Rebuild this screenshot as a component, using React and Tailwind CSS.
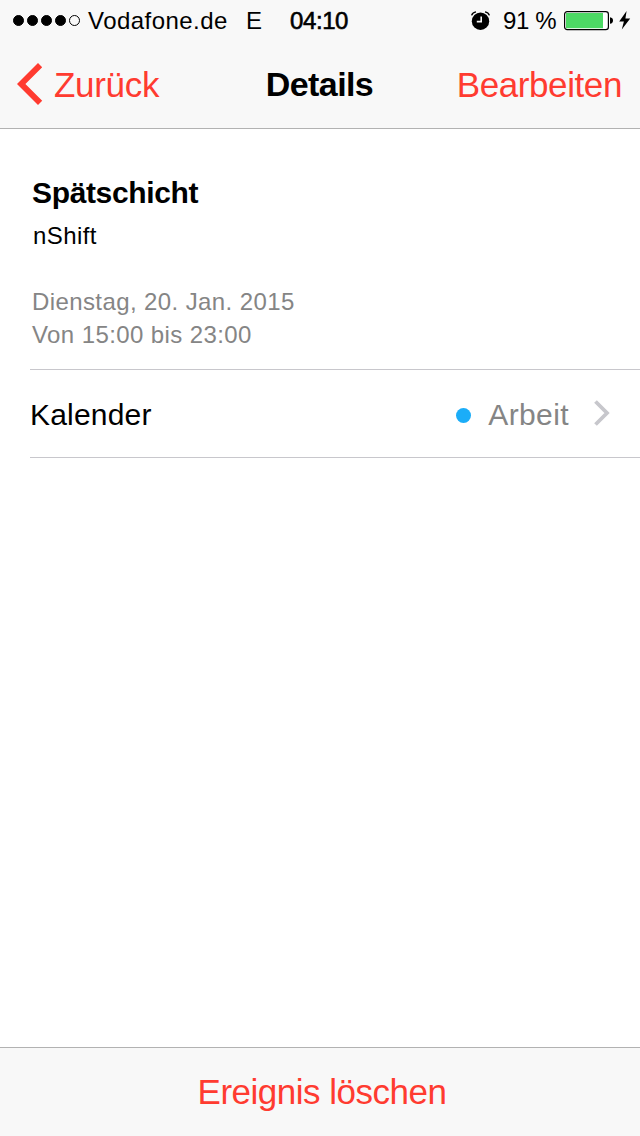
import React from 'react';

const SIGNAL = [true, true, true, true, false];

function AlarmIcon() {
  return (
    <svg width="20" height="20" viewBox="0 0 20 20" aria-hidden>
      <circle cx="9.5" cy="10.2" r="8.7" fill="#000" />
      <path d="M10.2 5.6v5H5.8" fill="none" stroke="#f8f8f8" strokeWidth="1.6" />
      <path d="M0.6 4.4Q1.600 1.400 5 0.900M18.400 4.400Q17.400 1.400 14 0.900" fill="none" stroke="#000" strokeWidth="1.400" />
    </svg>
  );
}

function BatteryIcon() {
  return (
    <svg width="50" height="20" viewBox="0 0 50 20" aria-hidden>
      <rect x="0.6" y="0.6" width="43.8" height="18" rx="2.6" fill="#fff" stroke="#000" strokeWidth="1.2" />
      <rect x="2" y="2" width="37" height="15.2" fill="#4cd964" />
      <path d="M46 6.2c2 .3 3 1.6 3 3.3s-1 3-3 3.300z" fill="#000" />
    </svg>
  );
}

function BoltIcon() {
  return (
    <svg width="12" height="19" viewBox="0 0 12 19" aria-hidden>
      <path d="M7.6 0L0.2 10.500h4.700L2.800 18.400 11.200 7.600H6.400z" fill="#000" />
    </svg>
  );
}

function StatusBar() {
  return (
    <div className="flex h-[41px] items-center pl-[13px] text-[24px] leading-none whitespace-nowrap">
      <div className="flex w-[75px] gap-[3px]">
        {SIGNAL.map((on, i) => (
          <span
            key={i}
            className={`size-[11px] rounded-full border border-black ${on ? 'bg-black' : ''}`}
          />
        ))}
      </div>
      <span className="w-[158px] tracking-[0.45px]">Vodafone.de</span>
      <span className="w-[44px]">E</span>
      <span className="w-[181px] tracking-[-0.4px] [-webkit-text-stroke:0.6px_black]">04:10</span>
      <AlarmIcon />
      <span className="ml-[12px] w-[61px] tracking-[-0.4px]">91 %</span>
      <BatteryIcon />
      <span className="ml-[5px]">
        <BoltIcon />
      </span>
    </div>
  );
}

function NavBar() {
  return (
    <div className="grid h-[86px] grid-cols-[1fr_auto_1fr] items-center pr-[18px] pl-[17px] text-[35px] leading-none">
      <button className="flex items-center gap-[11px] text-[#ff3b30]">
        <svg width="26" height="42" viewBox="0 0 26 42" aria-hidden>
          <path d="M21 0l4.200 4.200L8.400 21l16.800 16.800L21 42 0 21z" fill="currentColor" />
        </svg>
        <span className="tracking-[-0.3px]">Zurück</span>
      </button>
      <h1 className="text-[34px] font-bold tracking-[-0.6px]">Details</h1>
      <button className="justify-self-end tracking-[-0.4px] text-[#ff3b30]">Bearbeiten</button>
    </div>
  );
}

export default function App() {
  return (
    <div className="flex h-[1136px] w-[640px] flex-col bg-white font-['Liberation_Sans',Arial,sans-serif] text-black">
      <header className="h-[129px] border-b border-[#b2b2b2] bg-[#f8f8f8]">
        <StatusBar />
        <NavBar />
      </header>

      <main className="flex-1 pl-[30px]">
        <section className="h-[240px] pt-[44px] pl-[2px]">
          <h2 className="text-[30px] leading-[40px] font-bold tracking-[-0.35px]">Spätschicht</h2>
          <p className="pt-[6px] pl-px text-[24px] leading-[34px] tracking-[0.4px]">nShift</p>
          <div className="pt-[32px] text-[24px] leading-[33px] tracking-[0.4px] text-[#858585]">
            <p>Dienstag, 20. Jan. 2015</p>
            <p>Von 15:00 bis 23:00</p>
          </div>
        </section>

        <div className="flex h-[89px] items-center border-y border-[#c8c7cc] pr-[30px] text-[30px] leading-none">
          <span className="flex-1 pt-[2px] tracking-[0.2px]">Kalender</span>
          <span className="mt-[3px] mr-[17px] size-[15px] rounded-full bg-[#1badf8]" />
          <span className="mr-[25px] pt-[2px] tracking-[0.4px] text-[#858585]">Arbeit</span>
          <svg className="mb-px" width="16" height="26" viewBox="0 0 16 26" aria-hidden>
            <path d="M1.5 1.5L13 13 1.5 24.5" fill="none" stroke="#c7c7cc" strokeWidth="3.8" />
          </svg>
        </div>
      </main>

      <footer className="flex h-[89px] items-center justify-center border-t border-[#b2b2b2] bg-[#f8f8f8] pb-[2px] pl-[4px] text-[35px] leading-none text-[#ff3b30]">
        <button className="tracking-[-0.5px]">Ereignis löschen</button>
      </footer>
    </div>
  );
}
